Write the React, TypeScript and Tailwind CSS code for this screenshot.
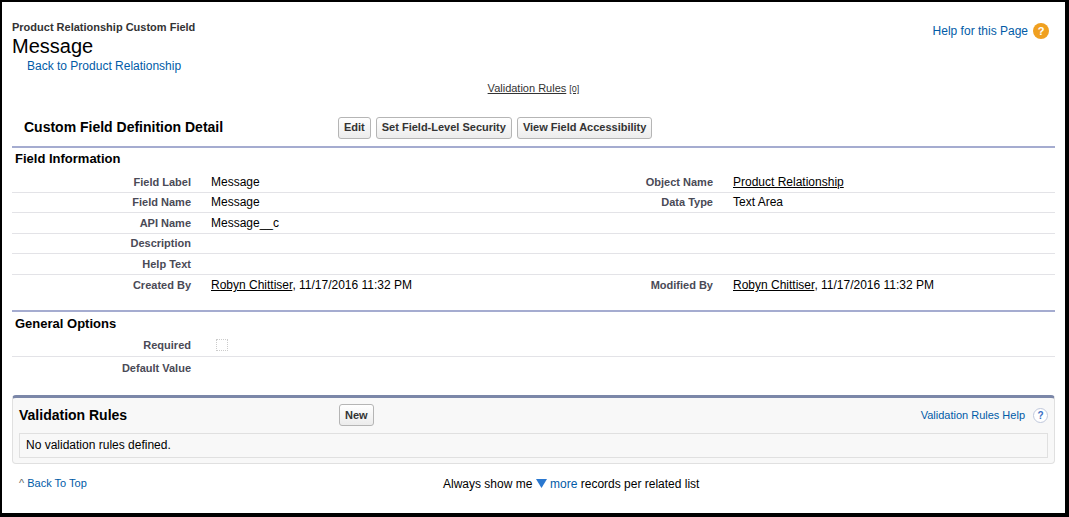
import React from "react";

const rows1: [string, React.ReactNode, string, React.ReactNode][] = [
  ["Field Label", "Message", "Object Name", <span className="underline">Product Relationship</span>],
  ["Field Name", "Message", "Data Type", "Text Area"],
  ["API Name", "Message__c", "", ""],
  ["Description", "", "", ""],
  ["Help Text", "", "", ""],
  ["Created By", <><span className="underline">Robyn Chittiser</span>, 11/17/2016 11:32 PM</>, "Modified By", <><span className="underline">Robyn Chittiser</span>, 11/17/2016 11:32 PM</>],
];

function Row({ a, b, c, d, last }: { a: string; b: React.ReactNode; c: string; d: React.ReactNode; last?: boolean }) {
  return (
    <div className={`flex h-[20.6px] items-center ${last ? "" : "border-b border-[#e3e3e7]"}`}>
      <div className="w-[179px] text-right text-[11px] font-bold text-[#4a4a56]">{a}</div>
      <div className="w-[342px] pl-[20px] text-[12px] text-black">{b}</div>
      <div className="w-[180px] text-right text-[11px] font-bold text-[#4a4a56]">{c}</div>
      <div className="flex-1 whitespace-nowrap pl-[20px] text-[12px] text-black">{d}</div>
    </div>
  );
}

function Btn({ children }: { children: React.ReactNode }) {
  return (
    <button className="h-[22px] rounded-[3px] border border-[#b5b5b5] bg-gradient-to-b from-white to-[#ececec] px-[5px] text-[11px] font-bold text-[#333]">
      {children}
    </button>
  );
}

export default function App() {
  return (
    <div className="h-[517px] w-[1069px] border-b-[4px] border-l-[2px] border-r-[4px] border-t-[2px] border-black bg-white" style={{ fontFamily: '"Liberation Sans", Arial, sans-serif' }}>
      <div className="relative px-[10px] pt-[19px]">
        <div className="text-[11px] font-bold leading-[13px] text-[#333]">Product Relationship Custom Field</div>
        <div className="text-[20px] leading-[24px] text-black">Message</div>
        <div className="pl-[15px] text-[12px] leading-[16px] text-[#015ba7]">Back to Product Relationship</div>
        <div className="absolute right-[16px] top-[20px] flex items-center gap-[5px] text-[12px] text-[#015ba7]">
          Help for this Page
          <span className="flex h-[16px] w-[16px] items-center justify-center rounded-full bg-[#f0a020] text-[11px] font-bold text-white">?</span>
        </div>
        <div className="mt-[7px] text-center text-[11px] leading-[14px] text-[#333]">
          <span className="underline">Validation Rules</span> <span className="text-[9px] underline">[0]</span>
        </div>
      </div>
      <div className="mx-[10px] mt-[13px]">
        <div className="flex h-[39px] items-center border-b-2 border-[#a5acd0]">
          <div className="w-[326px] pl-[12px] text-[14px] font-bold text-black">Custom Field Definition Detail</div>
          <div className="flex gap-[5px]">
            <Btn>Edit</Btn>
            <Btn>Set Field-Level Security</Btn>
            <Btn>View Field Accessibility</Btn>
          </div>
        </div>
        <div className="px-[3px] pt-[2px] text-[13px] font-bold leading-[18px] text-black">Field Information</div>
        <div className="mt-[4px]">
          {rows1.map((r, i) => (
            <Row key={i} a={r[0]} b={r[1]} c={r[2]} d={r[3]} last={i === rows1.length - 1} />
          ))}
        </div>
        <div className="mt-[14px] border-t-2 border-[#a5acd0] px-[3px] pt-[3px] text-[13px] font-bold leading-[18px] text-black">General Options</div>
        <div className="mt-[2px] flex h-[22px] items-center border-b border-[#e3e3e7]">
          <div className="w-[179px] text-right text-[11px] font-bold text-[#4a4a56]">Required</div>
          <div className="pl-[25px]"><div className="h-[12px] w-[12px] border border-dotted border-[#ccc]" /></div>
        </div>
        <div className="flex h-[23px] items-center">
          <div className="w-[179px] text-right text-[11px] font-bold text-[#4a4a56]">Default Value</div>
        </div>
        <div className="mt-[15px] rounded-[4px] border border-t-[3px] border-[#e0e0e0] border-t-[#7b87a8] bg-[#f8f8f8] px-[6px] pb-[5px]">
          <div className="flex h-[35px] items-center">
            <div className="w-[320px] text-[14px] font-bold text-black">Validation Rules</div>
            <Btn>New</Btn>
            <div className="flex-1" />
            <div className="flex items-center gap-[8px] text-[11px] text-[#015ba7]">
              Validation Rules Help
              <span className="flex h-[15px] w-[15px] items-center justify-center rounded-full border border-[#c0c8dc] bg-white text-[10px] font-bold text-[#3a6fc4]">?</span>
            </div>
          </div>
          <div className="flex h-[25px] items-center border border-[#e0e0e0] bg-[#f8f8f8] pl-[6px] text-[12px] text-black">No validation rules defined.</div>
        </div>
        <div className="relative mt-[11px] flex h-[18px] items-center text-[11px]">
          <div className="pl-[7px] text-[#015ba7]"><span className="text-[#666]">^</span> Back To Top</div>
          <div className="absolute left-[431px] flex items-center text-[12px] text-black">
            Always show me&nbsp;
            <svg width="11" height="9" viewBox="0 0 11 9"><path d="M0 0H11L5.5 9Z" fill="#2a78d0" /></svg>
            &nbsp;<span className="text-[#015ba7]">more</span>&nbsp;records per related list
          </div>
        </div>
      </div>
    </div>
  );
}
